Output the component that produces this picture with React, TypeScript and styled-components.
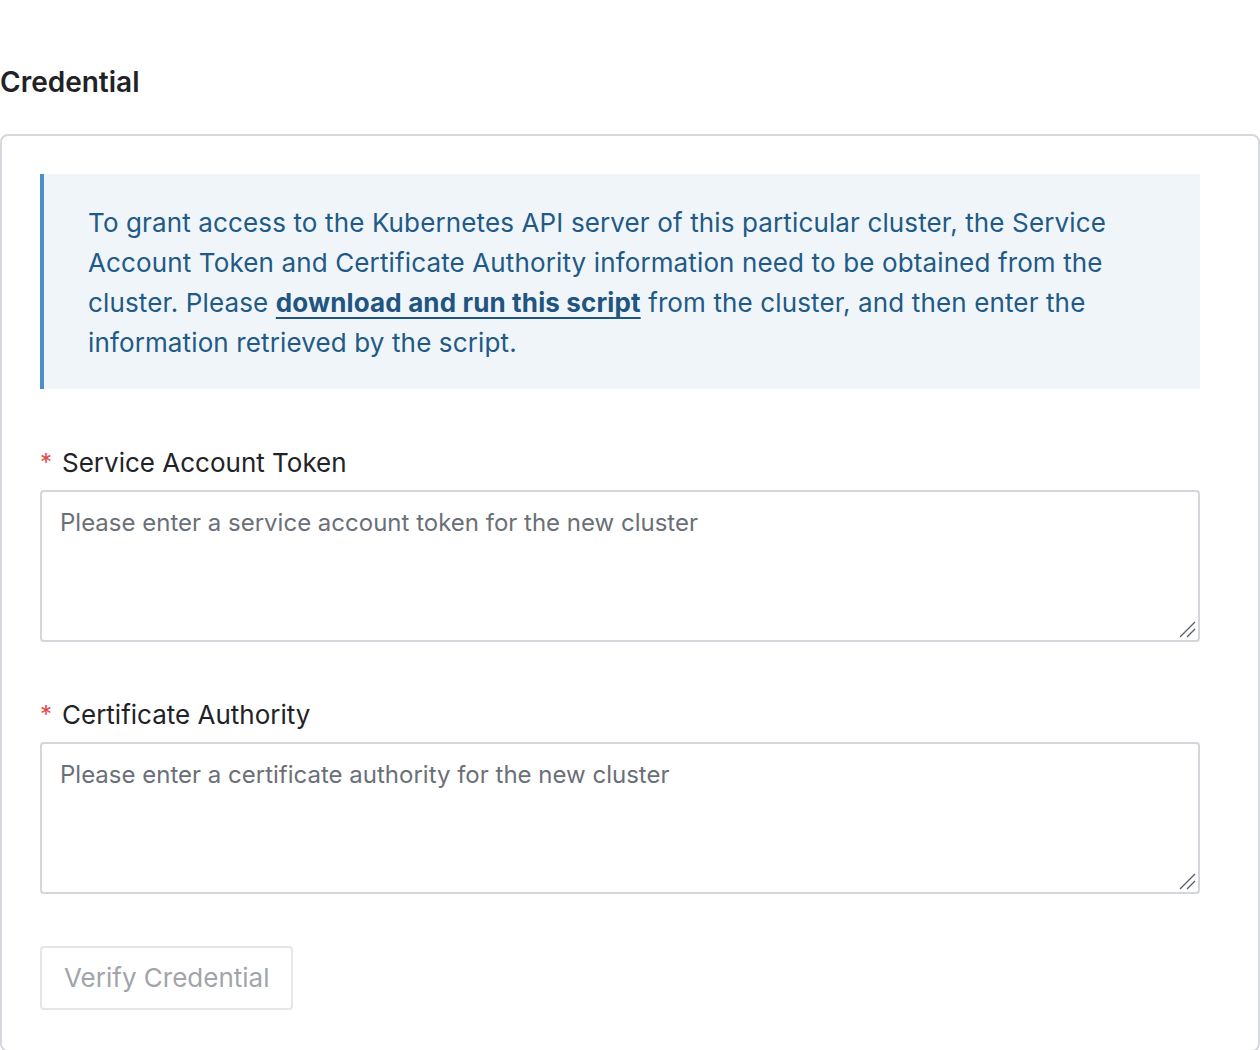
import React from "react";
import styled, { createGlobalStyle } from "styled-components";

const GlobalStyle = createGlobalStyle`
  html, body {
    margin: 0;
    padding: 0;
    background: #ffffff;
    font-family: Inter, "Noto Sans", "Liberation Sans", sans-serif;
  }
  * { box-sizing: border-box; }
`;

const Page = styled.div`
  padding-top: 64px;
  width: 1260px;
`;

const Title = styled.h2`
  margin: 0 0 34px 0;
  font-size: 28px;
  line-height: 36px;
  font-weight: 600;
  color: #1f2328;
`;

const Card = styled.section`
  border: 2px solid #d5d8dc;
  border-radius: 8px;
  padding: 38px 38px 40px 38px;
  min-height: 916px;
`;

const Content = styled.div`
  width: 1160px;
  display: flex;
  flex-direction: column;
`;

const Notice = styled.div`
  background: #f0f5fa;
  border-left: 4px solid #4a8fc9;
  padding: 29px 44px 26px 44px;
  color: #215a86;
  font-size: 26px;
  line-height: 40px;
  letter-spacing: 0.13px;
  margin-bottom: 58px;
`;

const NoticeLink = styled.a`
  color: #1f5580;
  font-weight: 700;
  text-decoration: underline;
  text-decoration-thickness: 2px;
  text-underline-offset: 5px;
`;

const Field = styled.div<{ $mb: number }>`
  display: flex;
  flex-direction: column;
  gap: 11px;
  margin-bottom: ${(p) => p.$mb}px;
`;

const Label = styled.label`
  display: flex;
  align-items: center;
  gap: 10px;
  font-size: 26px;
  line-height: 32px;
  color: #1f2328;
`;

const Required = styled.span`
  color: #e5484d;
  font-size: 24px;
  width: 12px;
`;

const AreaWrap = styled.div`
  position: relative;
`;

const TextArea = styled.textarea`
  display: block;
  width: 100%;
  height: 152px;
  border: 2px solid #d3d6da;
  border-radius: 4px;
  padding: 14px 18px;
  font-family: inherit;
  font-size: 24px;
  line-height: 33px;
  color: #1f2328;
  resize: none;
  outline: none;
  &::placeholder {
    color: #6b7078;
  }
`;

const Grip = styled.svg`
  position: absolute;
  right: 3px;
  bottom: 3px;
  width: 18px;
  height: 18px;
  pointer-events: none;
`;

const ButtonRow = styled.div`
  display: flex;
`;

const Button = styled.button`
  font-family: inherit;
  font-size: 26px;
  line-height: 36px;
  padding: 12px 22px;
  background: #ffffff;
  color: #a1a5ab;
  border: 2px solid #e4e6e9;
  border-radius: 4px;
  cursor: not-allowed;
`;

function ResizeGrip() {
  return (
    <Grip viewBox="0 0 18 18">
      <line x1="1" y1="16" x2="16" y2="1" stroke="#5a5d61" strokeWidth="1.3" />
      <line x1="8" y1="16" x2="16" y2="8" stroke="#5a5d61" strokeWidth="1.3" />
    </Grip>
  );
}

export default function App() {
  return (
    <Page>
      <GlobalStyle />
      <Title>Credential</Title>
      <Card>
        <Content>
          <Notice>
            To grant access to the Kubernetes API server of this particular cluster, the Service
            Account Token and Certificate Authority information need to be obtained from the
            cluster. Please <NoticeLink href="#">download and run this script</NoticeLink> from the
            cluster, and then enter the information retrieved by the script.
          </Notice>
          <Field $mb={57}>
            <Label>
              <Required>*</Required>
              Service Account Token
            </Label>
            <AreaWrap>
              <TextArea placeholder="Please enter a service account token for the new cluster" />
              <ResizeGrip />
            </AreaWrap>
          </Field>
          <Field $mb={52}>
            <Label>
              <Required>*</Required>
              Certificate Authority
            </Label>
            <AreaWrap>
              <TextArea placeholder="Please enter a certificate authority for the new cluster" />
              <ResizeGrip />
            </AreaWrap>
          </Field>
          <ButtonRow>
            <Button disabled>Verify Credential</Button>
          </ButtonRow>
        </Content>
      </Card>
    </Page>
  );
}
